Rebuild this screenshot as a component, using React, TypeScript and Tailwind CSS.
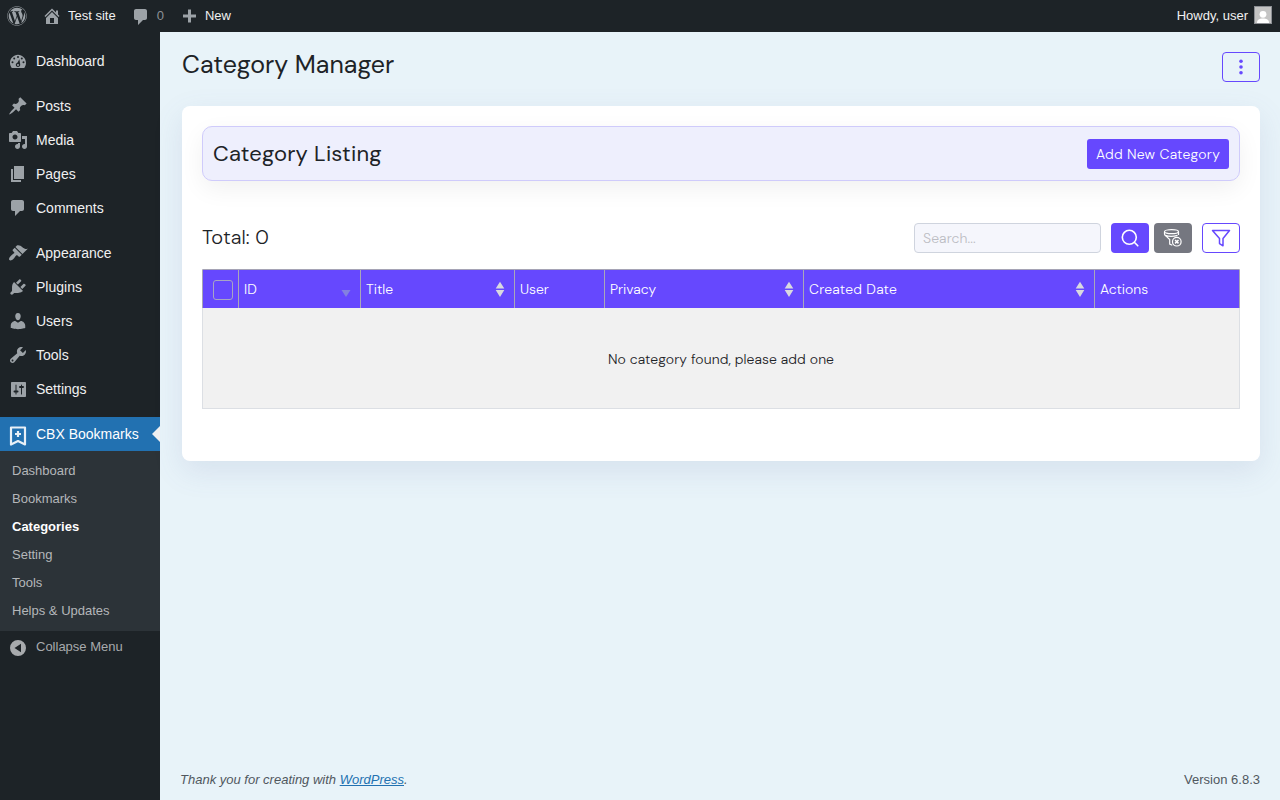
import type { ReactNode } from "react";
import { FaWordpress } from "react-icons/fa";

const ICONS = {
  dashboard:
    "M3.76 17h12.48c1.1-1.42 1.76-3.21 1.76-5.16 0-4.48-3.59-8.11-8-8.11s-8 3.63-8 8.11c0 1.95.66 3.74 1.76 5.16zM10 5a1 1 0 1 1 0 2 1 1 0 0 1 0-2zM6.2 6.5a1 1 0 1 1 0 2 1 1 0 0 1 0-2zM13.8 6.5a1 1 0 1 1 0 2 1 1 0 0 1 0-2zM4.5 10.3a1 1 0 1 1 0 2 1 1 0 0 1 0-2zM15.5 10.3a1 1 0 1 1 0 2 1 1 0 0 1 0-2zM11.4 8.2l.8 5.4c.2 1.2-.8 2.4-2.2 2.4s-2.3-1-2.2-2.4c.1-1 .8-1.700 1.600-1.900zM10 13a1 1 0 1 0 0 2 1 1 0 0 0 0-2z",
  posts:
    "M10.44 3.02l1.82-1.82 6.36 6.35-1.83 1.82c-1.05-.68-2.48-.57-3.41.36l-.75.75c-.92.93-1.04 2.35-.35 3.41l-1.83 1.82-2.41-2.41-2.8 2.79c-.42.42-3.38 2.71-3.8 2.29s1.86-3.39 2.28-3.81l2.79-2.79L4.1 9.36l1.83-1.82c1.05.69 2.48.57 3.4-.36l.75-.75c.93-.92 1.05-2.35.36-3.41z",
  media:
    "M13 11V4c0-.55-.45-1-1-1h-1.67L9 1H5L3.67 3H2c-.55 0-1 .45-1 1v7c0 .55.45 1 1 1h10c.55 0 1-.45 1-1zM7 4.5c1.38 0 2.5 1.12 2.5 2.5S8.38 9.5 7 9.5 4.5 8.38 4.5 7 5.62 4.5 7 4.5zM14 6h5v10.5c0 1.38-1.12 2.5-2.5 2.5S14 17.88 14 16.5s1.12-2.5 2.5-2.5c.17 0 .34.02.5.05V9h-3V6zm-4 8.05V13h2v3.5c0 1.38-1.12 2.5-2.5 2.5S7 17.88 7 16.5 8.12 14 9.5 14c.17 0 .34.02.5.05z",
  pages: "M6 15V2h10v13H6zm-1 1h8v2H3V5h2v11z",
  comments:
    "M5 2h9c1.1 0 2 .9 2 2v7c0 1.1-.9 2-2 2h-2l-5 5v-5H5c-1.1 0-2-.9-2-2V4c0-1.1.9-2 2-2z",
  appearance:
    "M14.48 11.06L7.41 3.99l1.5-1.5c.5-.56 2.3-.47 3.51.32 1.21.8 1.43 1.28 2.91 2.1 1.18.64 2.45 1.26 4.45.85zm-.71.71L6.7 4.7 4.93 6.47c-.39.39-.39 1.02 0 1.41l1.06 1.06c.39.39.39 1.03 0 1.42-.6.6-1.43 1.11-2.21 1.69-.35.26-.7.53-1.01.84C1.43 14.23.4 16.08 1.4 17.07c.99 1 2.84-.03 4.18-1.36.31-.31.58-.66.85-1.02.57-.78 1.08-1.61 1.69-2.21.39-.39 1.02-.39 1.41 0l1.06 1.06c.39.39 1.02.39 1.41 0z",
  plugins:
    "M13.11 4.36L9.87 7.6 8 5.73l3.24-3.24c.35-.34 1.05-.2 1.56.32.52.51.66 1.21.31 1.55zm-8 1.77l.91-1.12 9.01 9.01-1.19.84c-.71.71-2.63 1.16-3.82 1.16H6.14L4.9 17.26c-.59.59-1.54.59-2.12 0-.59-.58-.59-1.53 0-2.12l1.24-1.24v-3.88c0-1.13.4-3.19 1.09-3.89zm7.26 3.97l3.24-3.24c.34-.35 1.04-.21 1.55.31.52.51.66 1.21.31 1.55l-3.24 3.25z",
  users:
    "M10 9.25c-2.27 0-2.73-3.44-2.73-3.44C7 4.02 7.82 2 9.97 2c2.16 0 2.98 2.02 2.71 3.81 0 0-.41 3.44-2.68 3.44zm0 2.57L12.72 10c2.39 0 4.52 2.33 4.52 4.53v2.49s-3.65 1.13-7.24 1.13c-3.65 0-7.24-1.13-7.24-1.13v-2.49c0-2.25 1.94-4.48 4.47-4.48z",
  tools:
    "M16.68 9.77c-1.34 1.34-3.3 1.67-4.95.99l-5.41 6.52c-.99.99-2.59.99-3.58 0s-.99-2.59 0-3.57l6.52-5.42c-.68-1.65-.35-3.61.99-4.95 1.28-1.28 3.12-1.62 4.72-1.06l-2.89 2.89 2.82 2.82 2.86-2.87c.53 1.58.18 3.39-1.08 4.65zM3.81 16.21c.4.39 1.04.39 1.43 0 .4-.4.4-1.04 0-1.43-.39-.4-1.03-.4-1.43 0-.39.39-.39 1.03 0 1.43z",
  settings:
    "M18 16V4c0-.55-.45-1-1-1H4c-.55 0-1 .45-1 1v13c0 .55.45 1 1 1h13c.55 0 1-.45 1-1zM8.500 11.500h1a1 1 0 0 1 0 2h-1V15a.5.5 0 0 1-1 0v-1.500h-1a1 1 0 0 1 0-2h1V6a.5.5 0 0 1 1 0zM14 9v6a.5.5 0 0 1-1 0V9h-1a1 1 0 0 1 0-2h1V6a.5.5 0 0 1 1 0v1h1a1 1 0 0 1 0 2z",
  home: "M16 8.5l1.53 1.53-1.06 1.06L10 4.6l-6.47 6.49-1.06-1.06L10 2.5l4 4v-2h2v4zm-6-2.46l6 5.99V18H4v-5.97zM12 17v-5H8v5h4z",
  plus: "M17 8.500v3h-5v5H9v-5H4v-3h5v-5h3v5z",
  collapse: "M10 2a8 8 0 1 1 0 16 8 8 0 0 1 0-16zM13 5.800v8.400L6.500 10z",
};

type IconName = keyof typeof ICONS;

function Dashicon({ name, className = "" }: { name: IconName; className?: string }) {
  return (
    <svg viewBox="0 0 20 20" className={`h-5 w-5 shrink-0 ${className}`} fill="currentColor" fillRule="evenodd">
      <path d={ICONS[name]} />
    </svg>
  );
}

const menuGroups: { name: IconName; label: string }[][] = [
  [{ name: "dashboard", label: "Dashboard" }],
  [
    { name: "posts", label: "Posts" },
    { name: "media", label: "Media" },
    { name: "pages", label: "Pages" },
    { name: "comments", label: "Comments" },
  ],
  [
    { name: "appearance", label: "Appearance" },
    { name: "plugins", label: "Plugins" },
    { name: "users", label: "Users" },
    { name: "tools", label: "Tools" },
    { name: "settings", label: "Settings" },
  ],
];

const submenu = ["Dashboard", "Bookmarks", "Categories", "Setting", "Tools", "Helps & Updates"];

function AdminBar() {
  return (
    <header className="flex h-8 items-center bg-[#1d2327] text-[13px] text-[#f0f0f1]">
      <a className="flex w-[34px] justify-center">
        <FaWordpress className="h-5 w-5 text-[#9ca2a7]" />
      </a>
      <a className="flex items-center pl-2">
        <Dashicon name="home" className="mr-1.5 text-[#9ca2a7]" />
        Test site
      </a>
      <a className="flex items-center pl-[15px] text-[#8c9196]">
        <Dashicon name="comments" className="relative top-px mr-1.5 text-[#9ca2a7]" />
        0
      </a>
      <a className="flex items-center pl-[15px]">
        <Dashicon name="plus" className="mr-1.5 text-[#9ca2a7]" />
        New
      </a>
      <a className="ml-auto flex items-center gap-1.5 pr-2">
        Howdy, user
        <svg viewBox="0 0 18 18" className="mb-0.5 h-[18px] w-[18px]">
          <rect width="18" height="18" fill="#8c8f94" />
          <rect x="1" y="1" width="16" height="16" fill="#c4c4c4" />
          <circle cx="9" cy="8.300" r="3.400" fill="#fff" />
          <path d="M3 17c0-3.500 2.500-4.500 6-4.500s6 1 6 4.500z" fill="#fff" />
        </svg>
      </a>
    </header>
  );
}

function Sidebar() {
  return (
    <nav className="w-40 shrink-0 bg-[#1d2327] pt-3 text-sm text-[#f0f0f1]">
      {menuGroups.map((group, i) => (
        <ul key={i} className="mb-[11px]">
          {group.map((item) => (
            <li key={item.label} className="flex h-[34px] items-center gap-2 pl-2">
              <Dashicon name={item.name} className="text-[#9ca2a7]" />
              {item.label}
            </li>
          ))}
        </ul>
      ))}
      <div className="relative flex h-[34px] items-center gap-2 bg-[#2271b1] pl-2 text-white">
        <svg viewBox="0 0 20 20" className="relative top-0.5 h-5 w-5" fill="none" stroke="#e8f0f7" strokeWidth="2.200">
          <path d="M3 1.500h14v17l-7-3.500-7 3.500z" strokeLinejoin="round" />
          <path d="M10 5v6M7 8h6" />
        </svg>
        CBX Bookmarks
        <span className="absolute top-[9px] right-0 border-y-8 border-r-8 border-y-transparent border-r-[#f0f0f1]" />
      </div>
      <ul className="bg-[#2c3338] py-1.5 text-[13px] text-[#b4b7ba]">
        {submenu.map((label) => (
          <li
            key={label}
            className={`flex h-7 items-center pl-3 ${label === "Categories" ? "font-semibold text-white" : ""}`}
          >
            {label}
          </li>
        ))}
      </ul>
      <button type="button" className="flex h-8 items-center gap-2 pl-2 text-[13px] text-[#a7aaad]">
        <Dashicon name="collapse" className="relative top-px" />
        Collapse Menu
      </button>
    </nav>
  );
}

function SortIcon({ active = false }: { active?: boolean }) {
  return (
    <svg viewBox="0 0 10 16" className={`h-4 w-2.5 ${active ? "text-[#8380e0]" : "text-[#d9d9df]"}`} fill="currentColor">
      {active ? <path d="M.5 9h9L5 16z" /> : <path d="M5 .8 9.300 7.600H.7zM.7 9h8.600L5 16z" />}
    </svg>
  );
}

const columns: { label: string; className: string; sort?: "active" | "both" }[] = [
  { label: "ID", className: "w-[122px]", sort: "active" },
  { label: "Title", className: "w-[154px]", sort: "both" },
  { label: "User", className: "w-[90px]" },
  { label: "Privacy", className: "w-[199px]", sort: "both" },
  { label: "Created Date", className: "w-[291px] tracking-[0.25px]", sort: "both" },
  { label: "Actions", className: "w-[145px]" },
];

function IconButton({ className, children }: { className: string; children: ReactNode }) {
  return (
    <button type="button" className={`flex h-[30px] w-[38px] items-center justify-center rounded-[4px] ${className}`}>
      {children}
    </button>
  );
}

function CategoryTable() {
  return (
    <div className="mt-4 h-[140px] border border-[#dcdfe4] border-t-[#a5a3b5] bg-[#f1f1f1] text-[14px]">
      <div className="-ml-px -mr-px flex h-[38px] border-x border-[#a5a3b5] bg-[#6648fe] text-white">
        <div className="w-[35px] shrink-0 pt-2.5 pl-2.5">
          <span className="block h-5 w-5 rounded-[3px] border border-[#a7a5c4]" />
        </div>
        {columns.map((col) => (
          <div
            key={col.label}
            className={`flex shrink-0 items-center justify-between border-l border-[#a9a7b8] pr-[9px] pl-[5px] ${col.className}`}
          >
            <span className="pt-px">{col.label}</span>
            {col.sort ? <SortIcon active={col.sort === "active"} /> : null}
          </div>
        ))}
      </div>
      <div className="flex h-[100px] items-center justify-center pt-0.5 tracking-[0.08px] text-[#1d2327]">
        No category found, please add one
      </div>
    </div>
  );
}

export default function App() {
  return (
    <div className="flex h-[800px] flex-col overflow-hidden bg-[#e8f3f9] font-['Liberation_Sans',Arial,sans-serif]">
      <AdminBar />
      <div className="flex min-h-0 flex-1">
        <Sidebar />
        <div className="flex min-w-0 flex-1 flex-col pr-5 pl-5">
          <main className="ml-0.5 font-['DM_Sans',Inter,sans-serif] font-light text-[#1d2327]">
            <div className="flex h-[74px] items-start justify-between pt-5">
              <h1 className="-mt-[3px] text-[25px] leading-8 font-normal">Category Manager</h1>
              <IconButton className="border border-[#6648fe] text-[#6648fe]">
                <svg viewBox="0 0 16 16" className="h-4 w-4" fill="currentColor">
                  <circle cx="8" cy="2.200" r="1.800" />
                  <circle cx="8" cy="8" r="1.800" />
                  <circle cx="8" cy="13.800" r="1.800" />
                </svg>
              </IconButton>
            </div>

            <section className="h-[355px] rounded-lg bg-white p-5 shadow-[0_10px_30px_rgba(90,110,160,0.13)]">
              <div className="flex h-[55px] items-center justify-between rounded-[10px] border border-[#cfcbfb] bg-[#eeeffd] px-2.5 shadow-[0_8px_24px_rgba(0,0,0,0.06)]">
                <h2 className="text-[22px] font-normal tracking-[0.2px]">Category Listing</h2>
                <button
                  type="button"
                  className="h-[30px] w-[142px] rounded-[3px] bg-[#6648fe] pt-0.5 text-[14px] tracking-[0.25px] text-white"
                >
                  Add New Category
                </button>
              </div>

              <div className="mt-[42px] flex h-[30px] items-center">
                <span className="mr-auto -mt-0.5 text-[20px] tracking-[0.12px]">Total: 0</span>
                <input
                  placeholder="Search..."
                  className="mr-2.5 h-[30px] w-[187px] rounded-[4px] border border-[#cfd4de] bg-[#f5f6fc] px-2 text-[14px] tracking-[0.1px] placeholder:text-[#bcbdc3]"
                />
                <IconButton className="mr-[5px] bg-[#6648fe] text-white">
                  <svg viewBox="0 0 20 20" className="h-5 w-5" fill="none" stroke="currentColor" strokeWidth="1.600">
                    <circle cx="9.300" cy="9.300" r="7" />
                    <path d="m14.300 14.300 3.500 3.500" strokeLinecap="round" />
                  </svg>
                </IconButton>
                <IconButton className="mr-2.5 bg-[#757780] text-white">
                  <svg viewBox="0 0 20 20" className="h-5 w-5" fill="none" stroke="currentColor" strokeWidth="1.200">
                    <ellipse cx="8.500" cy="3.700" rx="7" ry="2" />
                    <path d="M1.500 3.700v2.200c0 .8.500 1.400 1.300 2L6.700 11.500v4.600l2.600 1.200M15.500 3.700v3.300M2.200 7.200c3 1.300 8.500 1.300 12.300.2" />
                    <circle cx="13.800" cy="13.700" r="4.300" />
                    <path d="m12.100 12 3.400 3.400M15.500 12l-3.400 3.400" strokeWidth="1.500" />
                  </svg>
                </IconButton>
                <IconButton className="border border-[#6648fe] bg-white text-[#6648fe]">
                  <svg viewBox="0 0 20 20" className="h-5 w-5" fill="none" stroke="currentColor" strokeWidth="1.500" strokeLinejoin="round">
                    <path d="M1.500 2.500h17L12 10.500v7.300l-3.500-2.200v-5.100z" />
                  </svg>
                </IconButton>
              </div>

              <CategoryTable />
            </section>
          </main>

          <footer className="mt-auto flex h-10 items-center justify-between text-[13px] text-[#50575e]">
            <p className="italic">
              Thank you for creating with <a className="text-[#2271b1] underline">WordPress</a>.
            </p>
            <p>Version 6.8.3</p>
          </footer>
        </div>
      </div>
    </div>
  );
}
